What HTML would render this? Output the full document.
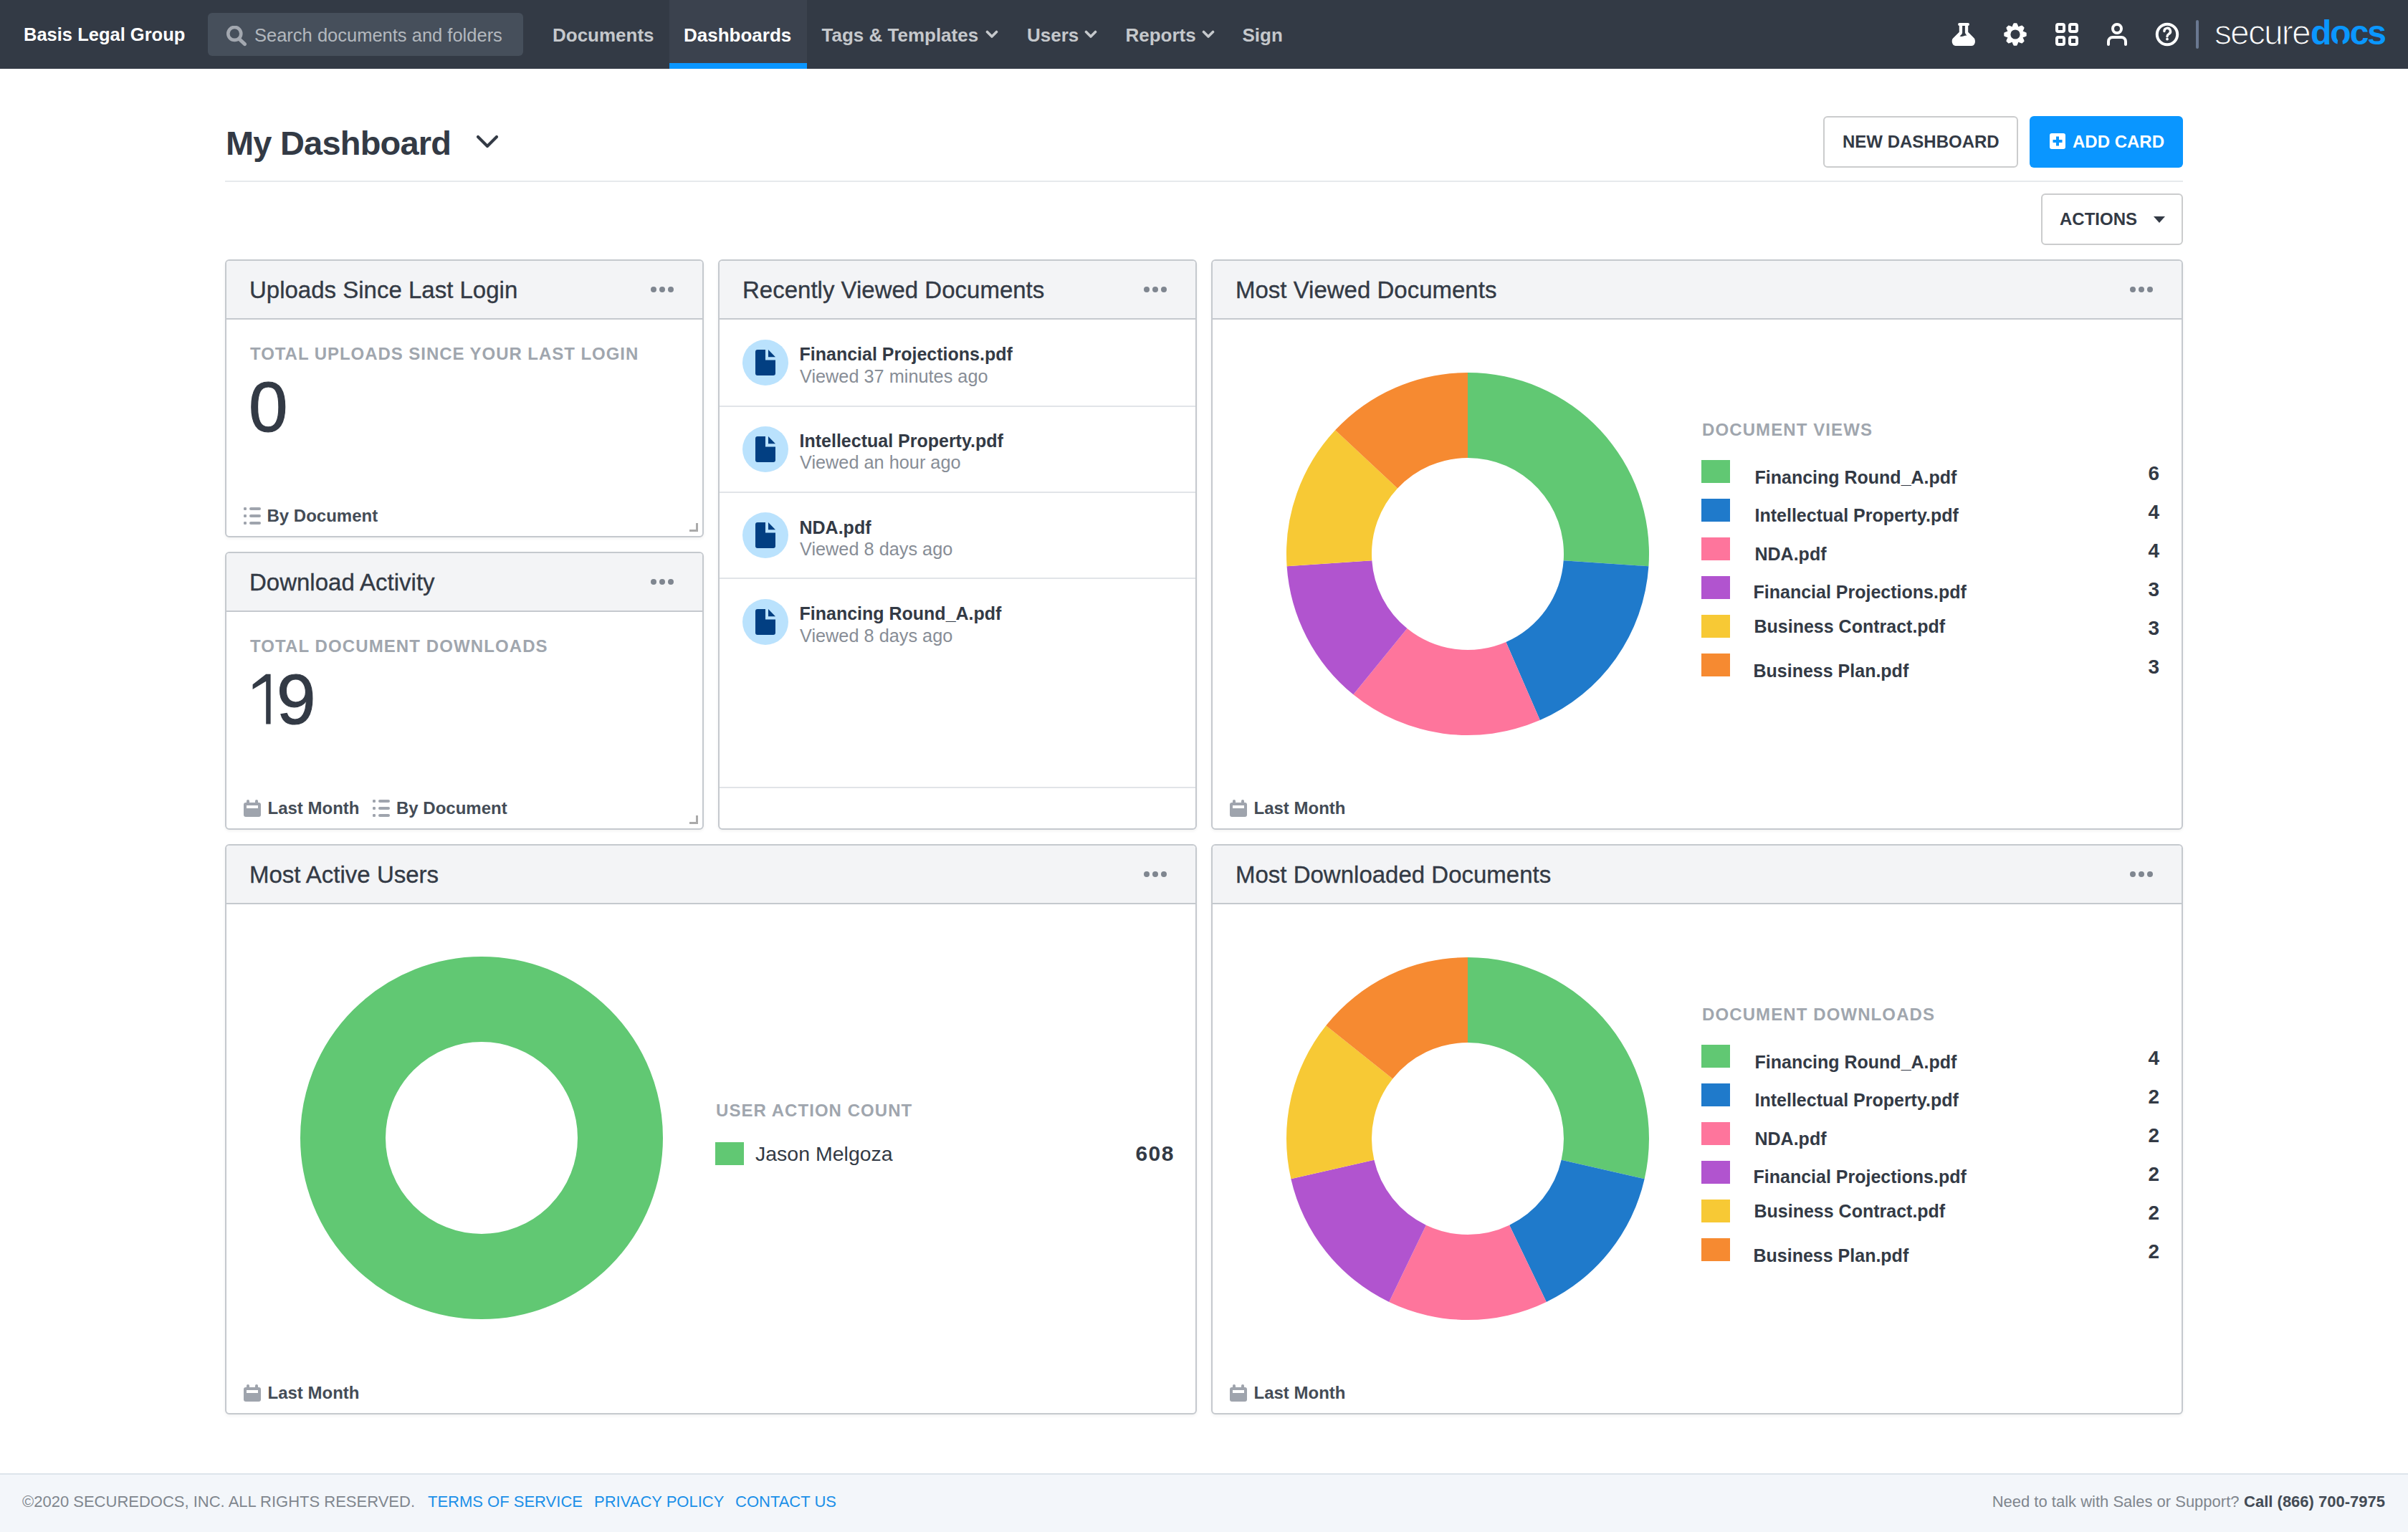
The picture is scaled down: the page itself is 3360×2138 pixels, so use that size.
<!DOCTYPE html>
<html><head><meta charset="utf-8"><title>My Dashboard</title>
<style>
html,body{margin:0;padding:0;width:3360px;height:2138px;overflow:hidden;background:#fff;position:relative}
.t{position:absolute;font-family:"Liberation Sans",sans-serif;line-height:1;white-space:nowrap}
svg{display:block}
</style></head><body>
<div style="position:absolute;left:0px;top:0px;width:3360px;height:96px;background:#333a45"></div><div class="t" style="left:33px;top:36.33px;font-size:25.5px;font-weight:700;color:#ffffff;">Basis Legal Group</div><div style="position:absolute;left:290px;top:18px;width:440px;height:60px;background:#464f5b;border-radius:6px"></div><svg style="position:absolute;left:314px;top:36px" width="32" height="30" viewBox="0 0 32 30"><circle cx="13.3" cy="10.9" r="9" fill="none" stroke="#a3a8b0" stroke-width="4.6"/><line x1="20" y1="18.6" x2="27.6" y2="25.6" stroke="#a3a8b0" stroke-width="5" stroke-linecap="round"/></svg><div class="t" style="left:355px;top:37.33px;font-size:25.5px;font-weight:400;color:#b3b8be;">Search documents and folders</div><div style="position:absolute;left:934px;top:0px;width:192px;height:96px;background:#3b424e"></div><div style="position:absolute;left:934px;top:88px;width:192px;height:8px;background:#0a96ff"></div><div class="t" style="left:771px;top:36.40px;font-size:26px;font-weight:700;color:#c5c8cc;">Documents</div><div class="t" style="left:954px;top:36.40px;font-size:26px;font-weight:700;color:#ffffff;">Dashboards</div><div class="t" style="left:1146.5px;top:36.40px;font-size:26px;font-weight:700;color:#c5c8cc;">Tags &amp; Templates</div><div class="t" style="left:1433px;top:36.40px;font-size:26px;font-weight:700;color:#c5c8cc;">Users</div><div class="t" style="left:1570.5px;top:36.40px;font-size:26px;font-weight:700;color:#c5c8cc;">Reports</div><div class="t" style="left:1733.5px;top:36.40px;font-size:26px;font-weight:700;color:#c5c8cc;">Sign</div><svg style="position:absolute;left:1375px;top:42px" width="18" height="12" viewBox="0 0 18 12"><polyline points="2.5,2.5 9,9 15.5,2.5" fill="none" stroke="#c5c8cc" stroke-width="3.6" stroke-linecap="round" stroke-linejoin="round"/></svg><svg style="position:absolute;left:1513px;top:42px" width="18" height="12" viewBox="0 0 18 12"><polyline points="2.5,2.5 9,9 15.5,2.5" fill="none" stroke="#c5c8cc" stroke-width="3.6" stroke-linecap="round" stroke-linejoin="round"/></svg><svg style="position:absolute;left:1677px;top:42px" width="18" height="12" viewBox="0 0 18 12"><polyline points="2.5,2.5 9,9 15.5,2.5" fill="none" stroke="#c5c8cc" stroke-width="3.6" stroke-linecap="round" stroke-linejoin="round"/></svg><svg style="position:absolute;left:2723px;top:31px" width="34" height="34" viewBox="0 0 34 34"><rect x="9.1" y="1" width="15.9" height="3.9" rx="1.95" fill="#fff"/><path d="M10.8 4.5 H23.2 V13.7 L31.6 22.3 C34 25 33.4 32.9 28 32.9 H5.8 C0.4 32.9 -0.4 25 2 22.5 L10.8 13.7 Z" fill="#fff"/><path d="M15.1 5 H18.9 V14.6 C19.4 16.3 20.4 17.6 21.6 18.6 C19.6 18.5 18.2 18.9 16.6 19.5 C15 20.1 13 20.1 11.4 19.5 C13.6 18 15.1 16.4 15.1 14.6 Z" fill="#333a45"/></svg><svg style="position:absolute;left:2796px;top:32px" width="32" height="32" viewBox="0 0 32 32"><path d="M12.88 3.79 L14.19 1.01 L17.81 1.01 L19.12 3.79 Q19.52 7.50 22.43 5.16 L25.32 4.12 L27.88 6.68 L26.84 9.57 Q24.50 12.48 28.21 12.88 L30.99 14.19 L30.99 17.81 L28.21 19.12 Q24.50 19.52 26.84 22.43 L27.88 25.32 L25.32 27.88 L22.43 26.84 Q19.52 24.50 19.12 28.21 L17.81 30.99 L14.19 30.99 L12.88 28.21 Q12.48 24.50 9.57 26.84 L6.68 27.88 L4.12 25.32 L5.16 22.43 Q7.50 19.52 3.79 19.12 L1.01 17.81 L1.01 14.19 L3.79 12.88 Q7.50 12.48 5.16 9.57 L4.12 6.68 L6.68 4.12 L9.57 5.16 Q12.48 7.50 12.88 3.79Z" fill="#fff" stroke="#fff" stroke-width="1.4" stroke-linejoin="round"/><circle cx="16" cy="16" r="6.6" fill="#333a45"/></svg><svg style="position:absolute;left:2868px;top:32px" width="32" height="32" viewBox="0 0 32 32"><rect x="2" y="2" width="10" height="10" rx="2" fill="none" stroke="#fff" stroke-width="4"/><rect x="2" y="20" width="10" height="10" rx="2" fill="none" stroke="#fff" stroke-width="4"/><rect x="20" y="2" width="10" height="10" rx="2" fill="none" stroke="#fff" stroke-width="4"/><rect x="20" y="20" width="10" height="10" rx="2" fill="none" stroke="#fff" stroke-width="4"/></svg><svg style="position:absolute;left:2938px;top:30px" width="32" height="36" viewBox="0 0 32 36"><circle cx="16" cy="10" r="6" fill="none" stroke="#fff" stroke-width="4"/><path d="M4 32 v-4 a6 6 0 0 1 6 -6 h12 a6 6 0 0 1 6 6 v4" fill="none" stroke="#fff" stroke-width="4" stroke-linecap="round"/></svg><svg style="position:absolute;left:3007px;top:31px" width="34" height="34" viewBox="0 0 34 34"><circle cx="17" cy="17" r="14.2" fill="none" stroke="#fff" stroke-width="4"/><path d="M12.9 12.6 a4.3 4.3 0 1 1 6.4 3.8 c-1.4 0.9 -2.3 1.5 -2.3 3.3" fill="none" stroke="#fff" stroke-width="3.4" stroke-linecap="round"/><circle cx="17" cy="23.6" r="1.9" fill="#fff"/></svg><div style="position:absolute;left:3064px;top:28px;width:4px;height:40px;background:#6a7891;border-radius:2px"></div><div class="t" style="left:3090px;top:22px;font-size:48px;line-height:1;color:#fff;font-weight:400;letter-spacing:-1.9px;-webkit-text-stroke:1.2px #333a45">secure</div><div class="t" style="left:3224px;top:22px;font-size:48px;line-height:1;color:#0a97ff;font-weight:700;letter-spacing:-2px">docs</div><svg style="position:absolute;left:3258px;top:50px" width="16" height="14" viewBox="0 0 16 14"><polygon points="4.8,0 9.6,0 11.2,14 3.2,14" fill="#333a45"/></svg><div class="t" style="left:315px;top:176.05px;font-size:47px;font-weight:700;color:#333a45;letter-spacing:-0.8px;">My Dashboard</div><svg style="position:absolute;left:664px;top:188px" width="32" height="20" viewBox="0 0 32 20"><polyline points="3,3 16,16 29,3" fill="none" stroke="#333a45" stroke-width="4.2" stroke-linecap="round" stroke-linejoin="round"/></svg><div style="position:absolute;left:314px;top:252px;width:2732px;height:2px;background:#e6e9ec"></div><div style="position:absolute;left:2544px;top:162px;width:272px;height:72px;border:2px solid #cbcccd;border-radius:6px;box-sizing:border-box;background:#fff"></div><div class="t" style="left:2571px;top:185.60px;font-size:24px;font-weight:700;color:#333a45;">NEW DASHBOARD</div><div style="position:absolute;left:2832px;top:162px;width:214px;height:72px;background:#0a96ff;border-radius:6px"></div><svg style="position:absolute;left:2860px;top:186px" width="22" height="22" viewBox="0 0 22 22"><rect x="0" y="0" width="22" height="22" rx="3" fill="#fff"/><rect x="9" y="4.5" width="4" height="13" fill="#0a96ff"/><rect x="4.5" y="9" width="13" height="4" fill="#0a96ff"/></svg><div class="t" style="left:2892px;top:185.60px;font-size:24px;font-weight:700;color:#ffffff;">ADD CARD</div><div style="position:absolute;left:2848px;top:270px;width:198px;height:72px;border:2px solid #cbcccd;border-radius:6px;box-sizing:border-box;background:#fff"></div><div class="t" style="left:2874px;top:293.60px;font-size:24px;font-weight:700;color:#333a45;">ACTIONS</div><svg style="position:absolute;left:3004.5px;top:301.5px" width="16" height="10" viewBox="0 0 16 10"><polygon points="0,0 16,0 8,9" fill="#333a45"/></svg><div style="position:absolute;left:314px;top:362px;width:668px;height:388px;box-sizing:border-box;border:2px solid #c5c9ce;border-radius:6px;background:#fff;overflow:hidden;box-shadow:0 2px 4px rgba(0,0,0,0.05)"><div style="position:absolute;left:0;top:0;right:0;height:80px;background:#f3f4f6;border-bottom:2px solid #c5c9ce"></div></div><div class="t" style="left:348px;top:387.95px;font-size:33px;font-weight:400;color:#333a45;-webkit-text-stroke:0.35px #333a45">Uploads Since Last Login</div><svg style="position:absolute;left:908px;top:400px" width="32" height="8" viewBox="0 0 32 8"><circle cx="4" cy="4" r="4" fill="#7f8690"/><circle cx="16" cy="4" r="4" fill="#7f8690"/><circle cx="28" cy="4" r="4" fill="#7f8690"/></svg><div style="position:absolute;left:314px;top:770px;width:668px;height:388px;box-sizing:border-box;border:2px solid #c5c9ce;border-radius:6px;background:#fff;overflow:hidden;box-shadow:0 2px 4px rgba(0,0,0,0.05)"><div style="position:absolute;left:0;top:0;right:0;height:80px;background:#f3f4f6;border-bottom:2px solid #c5c9ce"></div></div><div class="t" style="left:348px;top:795.95px;font-size:33px;font-weight:400;color:#333a45;-webkit-text-stroke:0.35px #333a45">Download Activity</div><svg style="position:absolute;left:908px;top:808px" width="32" height="8" viewBox="0 0 32 8"><circle cx="4" cy="4" r="4" fill="#7f8690"/><circle cx="16" cy="4" r="4" fill="#7f8690"/><circle cx="28" cy="4" r="4" fill="#7f8690"/></svg><div style="position:absolute;left:1002px;top:362px;width:668px;height:796px;box-sizing:border-box;border:2px solid #c5c9ce;border-radius:6px;background:#fff;overflow:hidden;box-shadow:0 2px 4px rgba(0,0,0,0.05)"><div style="position:absolute;left:0;top:0;right:0;height:80px;background:#f3f4f6;border-bottom:2px solid #c5c9ce"></div></div><div class="t" style="left:1036px;top:387.95px;font-size:33px;font-weight:400;color:#333a45;-webkit-text-stroke:0.35px #333a45">Recently Viewed Documents</div><svg style="position:absolute;left:1596px;top:400px" width="32" height="8" viewBox="0 0 32 8"><circle cx="4" cy="4" r="4" fill="#7f8690"/><circle cx="16" cy="4" r="4" fill="#7f8690"/><circle cx="28" cy="4" r="4" fill="#7f8690"/></svg><div style="position:absolute;left:1690px;top:362px;width:1356px;height:796px;box-sizing:border-box;border:2px solid #c5c9ce;border-radius:6px;background:#fff;overflow:hidden;box-shadow:0 2px 4px rgba(0,0,0,0.05)"><div style="position:absolute;left:0;top:0;right:0;height:80px;background:#f3f4f6;border-bottom:2px solid #c5c9ce"></div></div><div class="t" style="left:1724px;top:387.95px;font-size:33px;font-weight:400;color:#333a45;-webkit-text-stroke:0.35px #333a45">Most Viewed Documents</div><svg style="position:absolute;left:2972px;top:400px" width="32" height="8" viewBox="0 0 32 8"><circle cx="4" cy="4" r="4" fill="#7f8690"/><circle cx="16" cy="4" r="4" fill="#7f8690"/><circle cx="28" cy="4" r="4" fill="#7f8690"/></svg><div style="position:absolute;left:314px;top:1178px;width:1356px;height:796px;box-sizing:border-box;border:2px solid #c5c9ce;border-radius:6px;background:#fff;overflow:hidden;box-shadow:0 2px 4px rgba(0,0,0,0.05)"><div style="position:absolute;left:0;top:0;right:0;height:80px;background:#f3f4f6;border-bottom:2px solid #c5c9ce"></div></div><div class="t" style="left:348px;top:1203.95px;font-size:33px;font-weight:400;color:#333a45;-webkit-text-stroke:0.35px #333a45">Most Active Users</div><svg style="position:absolute;left:1596px;top:1216px" width="32" height="8" viewBox="0 0 32 8"><circle cx="4" cy="4" r="4" fill="#7f8690"/><circle cx="16" cy="4" r="4" fill="#7f8690"/><circle cx="28" cy="4" r="4" fill="#7f8690"/></svg><div style="position:absolute;left:1690px;top:1178px;width:1356px;height:796px;box-sizing:border-box;border:2px solid #c5c9ce;border-radius:6px;background:#fff;overflow:hidden;box-shadow:0 2px 4px rgba(0,0,0,0.05)"><div style="position:absolute;left:0;top:0;right:0;height:80px;background:#f3f4f6;border-bottom:2px solid #c5c9ce"></div></div><div class="t" style="left:1724px;top:1203.95px;font-size:33px;font-weight:400;color:#333a45;-webkit-text-stroke:0.35px #333a45">Most Downloaded Documents</div><svg style="position:absolute;left:2972px;top:1216px" width="32" height="8" viewBox="0 0 32 8"><circle cx="4" cy="4" r="4" fill="#7f8690"/><circle cx="16" cy="4" r="4" fill="#7f8690"/><circle cx="28" cy="4" r="4" fill="#7f8690"/></svg><div class="t" style="left:349px;top:481.60px;font-size:24px;font-weight:700;color:#a0a6ae;letter-spacing:0.95px;">TOTAL UPLOADS SINCE YOUR LAST LOGIN</div><div class="t" style="left:347px;top:518.70px;font-size:98px;font-weight:400;color:#333a45;-webkit-text-stroke:1.2px #333a45">0</div><svg style="position:absolute;left:340px;top:708px" width="24" height="24" viewBox="0 0 24 24"><rect x="0" y="0" width="4" height="4" rx="1.2" fill="#9fa4ad"/><rect x="8" y="0" width="16" height="4" rx="2" fill="#9fa4ad"/><rect x="0" y="10" width="4" height="4" rx="1.2" fill="#9fa4ad"/><rect x="8" y="10" width="16" height="4" rx="2" fill="#9fa4ad"/><rect x="0" y="20" width="4" height="4" rx="1.2" fill="#9fa4ad"/><rect x="8" y="20" width="16" height="4" rx="2" fill="#9fa4ad"/></svg><div class="t" style="left:372.5px;top:707.60px;font-size:24px;font-weight:700;color:#444c56;">By Document</div><svg style="position:absolute;left:962px;top:730px" width="12" height="12" viewBox="0 0 12 12"><path d="M9 0 h3 v12 h-12 v-3 h9z" fill="#aaaaaa"/></svg><div class="t" style="left:349px;top:889.60px;font-size:24px;font-weight:700;color:#a0a6ae;letter-spacing:1.1px;">TOTAL DOCUMENT DOWNLOADS</div><svg style="position:absolute;left:352px;top:940px" width="28" height="71" viewBox="0 0 28 71"><path d="M19.2 0.7 h6.4 v69.7 h-6.4 v-59.6 l-18.6 11.2 v-6.8z" fill="#333a45"/></svg><div class="t" style="left:386px;top:926.70px;font-size:98px;font-weight:400;color:#333a45;-webkit-text-stroke:1.2px #333a45">9</div><svg style="position:absolute;left:340px;top:1116px" width="24" height="24" viewBox="0 0 24 24"><rect x="4" y="0" width="4" height="8" rx="2" fill="#9fa4ad"/><rect x="16" y="0" width="4" height="8" rx="2" fill="#9fa4ad"/><rect x="0" y="4" width="24" height="20" rx="3" fill="#9fa4ad"/><rect x="4" y="8" width="16" height="4" fill="#fff"/></svg><div class="t" style="left:373.5px;top:1115.60px;font-size:24px;font-weight:700;color:#444c56;">Last Month</div><svg style="position:absolute;left:520px;top:1116px" width="24" height="24" viewBox="0 0 24 24"><rect x="0" y="0" width="4" height="4" rx="1.2" fill="#9fa4ad"/><rect x="8" y="0" width="16" height="4" rx="2" fill="#9fa4ad"/><rect x="0" y="10" width="4" height="4" rx="1.2" fill="#9fa4ad"/><rect x="8" y="10" width="16" height="4" rx="2" fill="#9fa4ad"/><rect x="0" y="20" width="4" height="4" rx="1.2" fill="#9fa4ad"/><rect x="8" y="20" width="16" height="4" rx="2" fill="#9fa4ad"/></svg><div class="t" style="left:553px;top:1115.60px;font-size:24px;font-weight:700;color:#444c56;">By Document</div><svg style="position:absolute;left:962px;top:1138px" width="12" height="12" viewBox="0 0 12 12"><path d="M9 0 h3 v12 h-12 v-3 h9z" fill="#aaaaaa"/></svg><div style="position:absolute;left:1036px;top:474.0px;width:64px;height:64px;border-radius:50%;background:#bae2fd"></div><svg style="position:absolute;left:1054px;top:487.8px" width="28" height="36" viewBox="0 0 28 36"><path d="M0 3 a3 3 0 0 1 3 -3 h11 v14.4 h14 v18.6 a3 3 0 0 1 -3 3 h-22 a3 3 0 0 1 -3 -3z" fill="#023f82"/><path d="M18 0 L28 10.2 H18z" fill="#023f82"/></svg><div class="t" style="left:1115.5px;top:482.25px;font-size:25px;font-weight:700;color:#333a45;">Financial Projections.pdf</div><div class="t" style="left:1116px;top:512.50px;font-size:25.3px;font-weight:400;color:#878d96;">Viewed 37 minutes ago</div><div style="position:absolute;left:1004px;top:566px;width:664px;height:2px;background:#e1e4e8"></div><div style="position:absolute;left:1036px;top:594.7px;width:64px;height:64px;border-radius:50%;background:#bae2fd"></div><svg style="position:absolute;left:1054px;top:608.5px" width="28" height="36" viewBox="0 0 28 36"><path d="M0 3 a3 3 0 0 1 3 -3 h11 v14.4 h14 v18.6 a3 3 0 0 1 -3 3 h-22 a3 3 0 0 1 -3 -3z" fill="#023f82"/><path d="M18 0 L28 10.2 H18z" fill="#023f82"/></svg><div class="t" style="left:1115.5px;top:602.95px;font-size:25px;font-weight:700;color:#333a45;">Intellectual Property.pdf</div><div class="t" style="left:1116px;top:633.20px;font-size:25.3px;font-weight:400;color:#878d96;">Viewed an hour ago</div><div style="position:absolute;left:1004px;top:686px;width:664px;height:2px;background:#e1e4e8"></div><div style="position:absolute;left:1036px;top:715.4px;width:64px;height:64px;border-radius:50%;background:#bae2fd"></div><svg style="position:absolute;left:1054px;top:729.2px" width="28" height="36" viewBox="0 0 28 36"><path d="M0 3 a3 3 0 0 1 3 -3 h11 v14.4 h14 v18.6 a3 3 0 0 1 -3 3 h-22 a3 3 0 0 1 -3 -3z" fill="#023f82"/><path d="M18 0 L28 10.2 H18z" fill="#023f82"/></svg><div class="t" style="left:1115.5px;top:723.65px;font-size:25px;font-weight:700;color:#333a45;">NDA.pdf</div><div class="t" style="left:1116px;top:753.89px;font-size:25.3px;font-weight:400;color:#878d96;">Viewed 8 days ago</div><div style="position:absolute;left:1004px;top:806px;width:664px;height:2px;background:#e1e4e8"></div><div style="position:absolute;left:1036px;top:836.1px;width:64px;height:64px;border-radius:50%;background:#bae2fd"></div><svg style="position:absolute;left:1054px;top:849.9px" width="28" height="36" viewBox="0 0 28 36"><path d="M0 3 a3 3 0 0 1 3 -3 h11 v14.4 h14 v18.6 a3 3 0 0 1 -3 3 h-22 a3 3 0 0 1 -3 -3z" fill="#023f82"/><path d="M18 0 L28 10.2 H18z" fill="#023f82"/></svg><div class="t" style="left:1115.5px;top:844.35px;font-size:25px;font-weight:700;color:#333a45;">Financing Round_A.pdf</div><div class="t" style="left:1116px;top:874.60px;font-size:25.3px;font-weight:400;color:#878d96;">Viewed 8 days ago</div><div style="position:absolute;left:1004px;top:1098px;width:664px;height:2px;background:#e1e4e8"></div><svg style="position:absolute;left:1793px;top:517.6px" width="510" height="510" viewBox="0 0 510 510"><path d="M255.00 2.00 A253 253 0 0 1 507.41 272.27 L388.69 264.14 A134 134 0 0 0 255.00 121.00Z" fill="#61c873"/><path d="M507.41 272.27 A253 253 0 0 1 355.80 487.05 L308.39 377.91 A134 134 0 0 0 388.69 264.14Z" fill="#1f7acb"/><path d="M355.80 487.05 A253 253 0 0 1 95.33 451.25 L170.43 358.95 A134 134 0 0 0 308.39 377.91Z" fill="#fe759c"/><path d="M95.33 451.25 A253 253 0 0 1 2.59 272.27 L121.31 264.14 A134 134 0 0 0 170.43 358.95Z" fill="#b154cf"/><path d="M2.59 272.27 A253 253 0 0 1 70.10 82.31 L157.07 163.54 A134 134 0 0 0 121.31 264.14Z" fill="#f7c935"/><path d="M70.10 82.31 A253 253 0 0 1 255.00 2.00 L255.00 121.00 A134 134 0 0 0 157.07 163.54Z" fill="#f68a31"/></svg><div class="t" style="left:2375px;top:588.10px;font-size:24px;font-weight:700;color:#a0a6ae;letter-spacing:1.1px;">DOCUMENT VIEWS</div><div style="position:absolute;left:2374px;top:642px;width:40px;height:32px;background:#61c873"></div><div class="t" style="left:2448.5px;top:653.75px;font-size:25px;font-weight:700;color:#333a45;margin-left:0px">Financing Round_A.pdf</div><div class="t" style="right:347px;top:646.80px;font-size:28px;font-weight:700;color:#333a45;">6</div><div style="position:absolute;left:2374px;top:696px;width:40px;height:32px;background:#1f7acb"></div><div class="t" style="left:2448.5px;top:707.45px;font-size:25px;font-weight:700;color:#333a45;margin-left:0px">Intellectual Property.pdf</div><div class="t" style="right:347px;top:700.80px;font-size:28px;font-weight:700;color:#333a45;">4</div><div style="position:absolute;left:2374px;top:750px;width:40px;height:32px;background:#fe759c"></div><div class="t" style="left:2448.5px;top:761.15px;font-size:25px;font-weight:700;color:#333a45;margin-left:0px">NDA.pdf</div><div class="t" style="right:347px;top:754.80px;font-size:28px;font-weight:700;color:#333a45;">4</div><div style="position:absolute;left:2374px;top:804px;width:40px;height:32px;background:#b154cf"></div><div class="t" style="left:2448.5px;top:814.25px;font-size:25px;font-weight:700;color:#333a45;margin-left:-2px">Financial Projections.pdf</div><div class="t" style="right:347px;top:808.80px;font-size:28px;font-weight:700;color:#333a45;">3</div><div style="position:absolute;left:2374px;top:858px;width:40px;height:32px;background:#f7c935"></div><div class="t" style="left:2448.5px;top:861.75px;font-size:25px;font-weight:700;color:#333a45;margin-left:-1px">Business Contract.pdf</div><div class="t" style="right:347px;top:862.80px;font-size:28px;font-weight:700;color:#333a45;">3</div><div style="position:absolute;left:2374px;top:912px;width:40px;height:32px;background:#f68a31"></div><div class="t" style="left:2448.5px;top:923.75px;font-size:25px;font-weight:700;color:#333a45;margin-left:-2px">Business Plan.pdf</div><div class="t" style="right:347px;top:916.80px;font-size:28px;font-weight:700;color:#333a45;">3</div><svg style="position:absolute;left:1793px;top:1333.5px" width="510" height="510" viewBox="0 0 510 510"><path d="M255.00 2.00 A253 253 0 0 1 501.66 311.30 L385.64 284.82 A134 134 0 0 0 255.00 121.00Z" fill="#61c873"/><path d="M501.66 311.30 A253 253 0 0 1 364.77 482.95 L313.14 375.73 A134 134 0 0 0 385.64 284.82Z" fill="#1f7acb"/><path d="M364.77 482.95 A253 253 0 0 1 145.23 482.95 L196.86 375.73 A134 134 0 0 0 313.14 375.73Z" fill="#fe759c"/><path d="M145.23 482.95 A253 253 0 0 1 8.34 311.30 L124.36 284.82 A134 134 0 0 0 196.86 375.73Z" fill="#b154cf"/><path d="M8.34 311.30 A253 253 0 0 1 57.20 97.26 L150.23 171.45 A134 134 0 0 0 124.36 284.82Z" fill="#f7c935"/><path d="M57.20 97.26 A253 253 0 0 1 255.00 2.00 L255.00 121.00 A134 134 0 0 0 150.23 171.45Z" fill="#f68a31"/></svg><div class="t" style="left:2375px;top:1404.10px;font-size:24px;font-weight:700;color:#a0a6ae;letter-spacing:1.1px;">DOCUMENT DOWNLOADS</div><div style="position:absolute;left:2374px;top:1458px;width:40px;height:32px;background:#61c873"></div><div class="t" style="left:2448.5px;top:1469.75px;font-size:25px;font-weight:700;color:#333a45;margin-left:0px">Financing Round_A.pdf</div><div class="t" style="right:347px;top:1462.80px;font-size:28px;font-weight:700;color:#333a45;">4</div><div style="position:absolute;left:2374px;top:1512px;width:40px;height:32px;background:#1f7acb"></div><div class="t" style="left:2448.5px;top:1523.45px;font-size:25px;font-weight:700;color:#333a45;margin-left:0px">Intellectual Property.pdf</div><div class="t" style="right:347px;top:1516.80px;font-size:28px;font-weight:700;color:#333a45;">2</div><div style="position:absolute;left:2374px;top:1566px;width:40px;height:32px;background:#fe759c"></div><div class="t" style="left:2448.5px;top:1577.15px;font-size:25px;font-weight:700;color:#333a45;margin-left:0px">NDA.pdf</div><div class="t" style="right:347px;top:1570.80px;font-size:28px;font-weight:700;color:#333a45;">2</div><div style="position:absolute;left:2374px;top:1620px;width:40px;height:32px;background:#b154cf"></div><div class="t" style="left:2448.5px;top:1630.25px;font-size:25px;font-weight:700;color:#333a45;margin-left:-2px">Financial Projections.pdf</div><div class="t" style="right:347px;top:1624.80px;font-size:28px;font-weight:700;color:#333a45;">2</div><div style="position:absolute;left:2374px;top:1674px;width:40px;height:32px;background:#f7c935"></div><div class="t" style="left:2448.5px;top:1677.75px;font-size:25px;font-weight:700;color:#333a45;margin-left:-1px">Business Contract.pdf</div><div class="t" style="right:347px;top:1678.80px;font-size:28px;font-weight:700;color:#333a45;">2</div><div style="position:absolute;left:2374px;top:1728px;width:40px;height:32px;background:#f68a31"></div><div class="t" style="left:2448.5px;top:1739.75px;font-size:25px;font-weight:700;color:#333a45;margin-left:-2px">Business Plan.pdf</div><div class="t" style="right:347px;top:1732.80px;font-size:28px;font-weight:700;color:#333a45;">2</div><svg style="position:absolute;left:416.6px;top:1333.4px" width="510" height="510" viewBox="0 0 510 510"><circle cx="255" cy="255" r="193.5" fill="none" stroke="#61c873" stroke-width="119"/></svg><div class="t" style="left:999px;top:1537.60px;font-size:24px;font-weight:700;color:#a0a6ae;letter-spacing:1.05px;">USER ACTION COUNT</div><div style="position:absolute;left:998px;top:1594px;width:40px;height:32px;background:#61c873"></div><div class="t" style="left:1054px;top:1596.28px;font-size:28.5px;font-weight:400;color:#333a45;">Jason Melgoza</div><div class="t" style="right:1721px;top:1595.00px;font-size:30px;font-weight:700;color:#333a45;letter-spacing:1.5px;">608</div><svg style="position:absolute;left:1716px;top:1116px" width="24" height="24" viewBox="0 0 24 24"><rect x="4" y="0" width="4" height="8" rx="2" fill="#9fa4ad"/><rect x="16" y="0" width="4" height="8" rx="2" fill="#9fa4ad"/><rect x="0" y="4" width="24" height="20" rx="3" fill="#9fa4ad"/><rect x="4" y="8" width="16" height="4" fill="#fff"/></svg><div class="t" style="left:1749.5px;top:1115.60px;font-size:24px;font-weight:700;color:#444c56;">Last Month</div><svg style="position:absolute;left:340px;top:1932px" width="24" height="24" viewBox="0 0 24 24"><rect x="4" y="0" width="4" height="8" rx="2" fill="#9fa4ad"/><rect x="16" y="0" width="4" height="8" rx="2" fill="#9fa4ad"/><rect x="0" y="4" width="24" height="20" rx="3" fill="#9fa4ad"/><rect x="4" y="8" width="16" height="4" fill="#fff"/></svg><div class="t" style="left:373.5px;top:1931.60px;font-size:24px;font-weight:700;color:#444c56;">Last Month</div><svg style="position:absolute;left:1716px;top:1932px" width="24" height="24" viewBox="0 0 24 24"><rect x="4" y="0" width="4" height="8" rx="2" fill="#9fa4ad"/><rect x="16" y="0" width="4" height="8" rx="2" fill="#9fa4ad"/><rect x="0" y="4" width="24" height="20" rx="3" fill="#9fa4ad"/><rect x="4" y="8" width="16" height="4" fill="#fff"/></svg><div class="t" style="left:1749.5px;top:1931.60px;font-size:24px;font-weight:700;color:#444c56;">Last Month</div><div style="position:absolute;left:0px;top:2056px;width:3360px;height:82px;background:#f3f6fa;border-top:2px solid #dde4eb;box-sizing:border-box"></div><div class="t" style="left:31px;top:2085.30px;font-size:22px;font-weight:400;color:#80868e;">©2020 SECUREDOCS, INC. ALL RIGHTS RESERVED.</div><div class="t" style="left:597px;top:2085.30px;font-size:22px;font-weight:400;color:#1a8fe8;">TERMS OF SERVICE</div><div class="t" style="left:829px;top:2085.30px;font-size:22px;font-weight:400;color:#1a8fe8;">PRIVACY POLICY</div><div class="t" style="left:1026px;top:2085.30px;font-size:22px;font-weight:400;color:#1a8fe8;">CONTACT US</div><div class="t" style="right:235.5px;top:2085.30px;font-size:22px;font-weight:400;color:#80868e;">Need to talk with Sales or Support?</div><div class="t" style="right:32px;top:2085.30px;font-size:22px;font-weight:700;color:#434b55;">Call (866) 700-7975</div>
</body></html>
